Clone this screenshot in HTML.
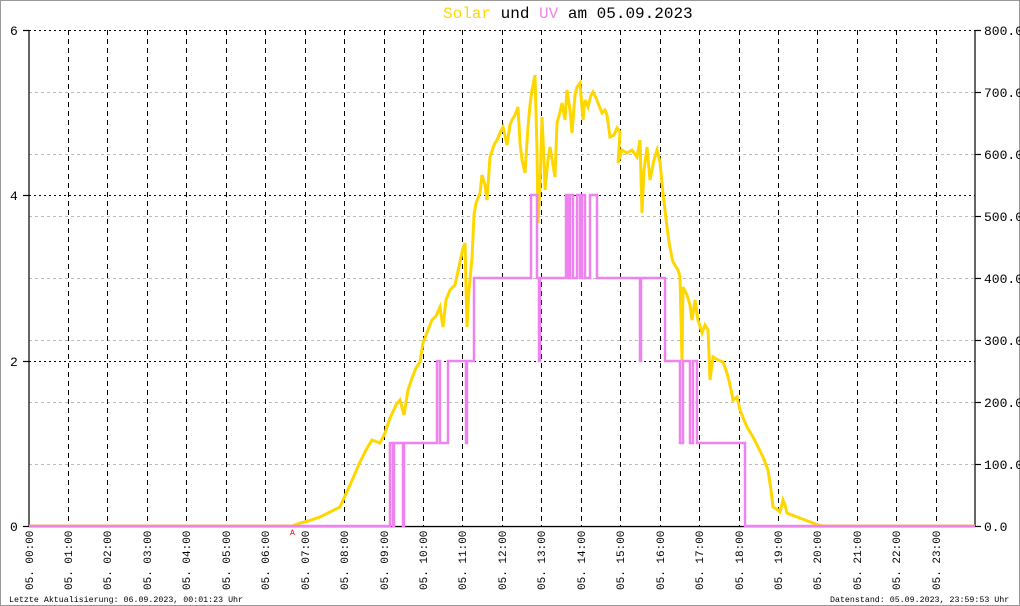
<!DOCTYPE html>
<html><head><meta charset="utf-8"><style>
html,body{margin:0;padding:0;background:#fff;}
svg{display:block;}
text{font-family:"Liberation Mono","DejaVu Sans Mono",monospace;}
</style></head><body>
<svg width="1020" height="606" viewBox="0 0 1020 606" xmlns="http://www.w3.org/2000/svg">
<rect x="0.5" y="0.5" width="1019" height="605" fill="#fff" stroke="#999"/>
<text x="443" y="18" font-size="16"><tspan fill="#ffd700">Solar</tspan><tspan fill="#000"> und </tspan><tspan fill="#ee82ee">UV</tspan><tspan fill="#000"> am 05.09.2023</tspan></text>
<g stroke="#bbb" stroke-dasharray="3,3" stroke-width="1">
<line x1="29" y1="92.5" x2="975" y2="92.5"/>
<line x1="29" y1="154.5" x2="975" y2="154.5"/>
<line x1="29" y1="216.5" x2="975" y2="216.5"/>
<line x1="29" y1="278.5" x2="975" y2="278.5"/>
<line x1="29" y1="340.5" x2="975" y2="340.5"/>
<line x1="29" y1="402.5" x2="975" y2="402.5"/>
<line x1="29" y1="464.5" x2="975" y2="464.5"/>
</g>
<g stroke="#000" stroke-dasharray="2,3" stroke-width="1">
<line x1="29" y1="30.5" x2="975" y2="30.5"/>
<line x1="29" y1="195.5" x2="975" y2="195.5"/>
<line x1="29" y1="361.5" x2="975" y2="361.5"/>
</g>
<g stroke="#000" stroke-dasharray="5,4" stroke-width="1">
<line x1="68.5" y1="30" x2="68.5" y2="526"/><line x1="107.5" y1="30" x2="107.5" y2="526"/><line x1="147.5" y1="30" x2="147.5" y2="526"/><line x1="186.5" y1="30" x2="186.5" y2="526"/><line x1="226.5" y1="30" x2="226.5" y2="526"/><line x1="265.5" y1="30" x2="265.5" y2="526"/><line x1="305.5" y1="30" x2="305.5" y2="526"/><line x1="344.5" y1="30" x2="344.5" y2="526"/><line x1="384.5" y1="30" x2="384.5" y2="526"/><line x1="423.5" y1="30" x2="423.5" y2="526"/><line x1="462.5" y1="30" x2="462.5" y2="526"/><line x1="502.5" y1="30" x2="502.5" y2="526"/><line x1="541.5" y1="30" x2="541.5" y2="526"/><line x1="581.5" y1="30" x2="581.5" y2="526"/><line x1="620.5" y1="30" x2="620.5" y2="526"/><line x1="660.5" y1="30" x2="660.5" y2="526"/><line x1="699.5" y1="30" x2="699.5" y2="526"/><line x1="739.5" y1="30" x2="739.5" y2="526"/><line x1="778.5" y1="30" x2="778.5" y2="526"/><line x1="817.5" y1="30" x2="817.5" y2="526"/><line x1="857.5" y1="30" x2="857.5" y2="526"/><line x1="896.5" y1="30" x2="896.5" y2="526"/><line x1="936.5" y1="30" x2="936.5" y2="526"/>
</g>
<g stroke="#000" stroke-width="1.2">
<line x1="29" y1="30" x2="29" y2="526"/>
<line x1="975" y1="30" x2="975" y2="526"/>
<line x1="29" y1="526.5" x2="975" y2="526.5"/>
<line x1="23" y1="30.5" x2="29" y2="30.5"/><line x1="23" y1="195.5" x2="29" y2="195.5"/><line x1="23" y1="361.5" x2="29" y2="361.5"/><line x1="23" y1="526.5" x2="29" y2="526.5"/>
<line x1="975" y1="30.5" x2="981" y2="30.5"/><line x1="975" y1="92.5" x2="981" y2="92.5"/><line x1="975" y1="154.5" x2="981" y2="154.5"/><line x1="975" y1="216.5" x2="981" y2="216.5"/><line x1="975" y1="278.5" x2="981" y2="278.5"/><line x1="975" y1="340.5" x2="981" y2="340.5"/><line x1="975" y1="402.5" x2="981" y2="402.5"/><line x1="975" y1="464.5" x2="981" y2="464.5"/><line x1="975" y1="526.5" x2="981" y2="526.5"/>
</g>
<g font-size="13" fill="#000">
<text x="10" y="35">6</text><text x="10" y="200">4</text><text x="10" y="366">2</text><text x="10" y="531">0</text>
<text x="984" y="35">800.0</text><text x="984" y="97">700.0</text><text x="984" y="159">600.0</text><text x="984" y="221">500.0</text><text x="984" y="283">400.0</text><text x="984" y="345">300.0</text><text x="984" y="407">200.0</text><text x="984" y="469">100.0</text><text x="984" y="531">0.0</text>
</g>
<polyline fill="none" stroke="#ffd700" stroke-width="3" stroke-linejoin="miter" points="29,526 292,526 300,523 308,521 320,517 330,512 340,507 344,498 350,485 360,462 366,450 372,440 380,443 385,433 390,418 396,405 400,400 404,415 408,390 412,378 416,368 420,362 423,343 428,330 432,320 436,316 440,307 443,327 446,300 450,290 455,285 460,262 463,248 465,243 467,327 469,290 472,258 474,215 476,203 480,193 482,175 485,185 487,200 490,157 494,145 497,140 500,133 503,127 507,145 510,125 512,120 515,115 518,107 520,143 522,160 525,173 528,127 530,105 532,90 534,80 535,75 537,150 538,223 540,187 542,117 544,160 545,190 548,160 550,147 553,165 555,177 557,123 560,112 562,103 565,120 567,90 570,110 572,133 575,95 577,87 580,83 583,120 585,100 588,107 591,95 593,92 596,98 598,103 602,113 605,110 607,115 610,137 614,135 617,128 620,132 618,163 622,150 627,153 632,150 637,157 640,140 642,213 644,170 647,147 650,180 654,160 657,150 660,162 663,193 667,227 669,242 672,258 673,262 678,270 680,277 682,360 683,287 687,295 690,305 692,320 695,300 698,320 702,333 705,325 708,330 710,380 713,357 718,360 723,362 727,373 730,385 733,400 737,397 740,410 744,420 747,427 750,432 753,437 758,447 763,457 768,470 771,490 773,507 778,510 780,512 783,500 785,505 787,513 792,515 797,517 805,520 813,523 818,525 822,526 975,526"/>
<polyline fill="none" stroke="#ee82ee" stroke-width="2.5" points="29,526 390,526 390,443 393,443 393,526 394,526 394,443 403,443 403,526 404,526 404,443 437,443 437,361 440,361 440,443 448,443 448,361 466,361 466,443 467,443 467,361 474,361 474,278 531,278 531,195 537,195 537,278 539,278 539,361 540,361 540,278 566,278 566,195 568,195 568,278 570,278 570,195 573,195 573,278 577,278 577,195 580,195 580,278 582,278 582,195 585,195 585,278 590,278 590,195 597,195 597,278 640,278 640,361 641,361 641,278 665,278 665,361 680,361 680,443 683,443 683,361 690,361 690,443 693,443 693,361 697,361 697,443 745,443 745,526 975,526"/>
<line x1="29" y1="527.5" x2="975" y2="527.5" stroke="#ffd700" stroke-width="1"/>
<text x="290" y="535" font-size="8" fill="#e00">A</text>
<g font-size="11" fill="#000">
<text transform="translate(33,590) rotate(-90)">05. 00:00</text>
<text transform="translate(72,590) rotate(-90)">05. 01:00</text>
<text transform="translate(111,590) rotate(-90)">05. 02:00</text>
<text transform="translate(151,590) rotate(-90)">05. 03:00</text>
<text transform="translate(190,590) rotate(-90)">05. 04:00</text>
<text transform="translate(230,590) rotate(-90)">05. 05:00</text>
<text transform="translate(269,590) rotate(-90)">05. 06:00</text>
<text transform="translate(309,590) rotate(-90)">05. 07:00</text>
<text transform="translate(348,590) rotate(-90)">05. 08:00</text>
<text transform="translate(388,590) rotate(-90)">05. 09:00</text>
<text transform="translate(427,590) rotate(-90)">05. 10:00</text>
<text transform="translate(466,590) rotate(-90)">05. 11:00</text>
<text transform="translate(506,590) rotate(-90)">05. 12:00</text>
<text transform="translate(545,590) rotate(-90)">05. 13:00</text>
<text transform="translate(585,590) rotate(-90)">05. 14:00</text>
<text transform="translate(624,590) rotate(-90)">05. 15:00</text>
<text transform="translate(664,590) rotate(-90)">05. 16:00</text>
<text transform="translate(703,590) rotate(-90)">05. 17:00</text>
<text transform="translate(743,590) rotate(-90)">05. 18:00</text>
<text transform="translate(782,590) rotate(-90)">05. 19:00</text>
<text transform="translate(821,590) rotate(-90)">05. 20:00</text>
<text transform="translate(861,590) rotate(-90)">05. 21:00</text>
<text transform="translate(900,590) rotate(-90)">05. 22:00</text>
<text transform="translate(940,590) rotate(-90)">05. 23:00</text>
</g>
<text x="9" y="602" font-size="8.3" fill="#000">Letzte Aktualisierung: 06.09.2023, 00:01:23 Uhr</text>
<text x="830" y="602" font-size="8.3" fill="#000">Datenstand: 05.09.2023, 23:59:53 Uhr</text>
</svg>
</body></html>
